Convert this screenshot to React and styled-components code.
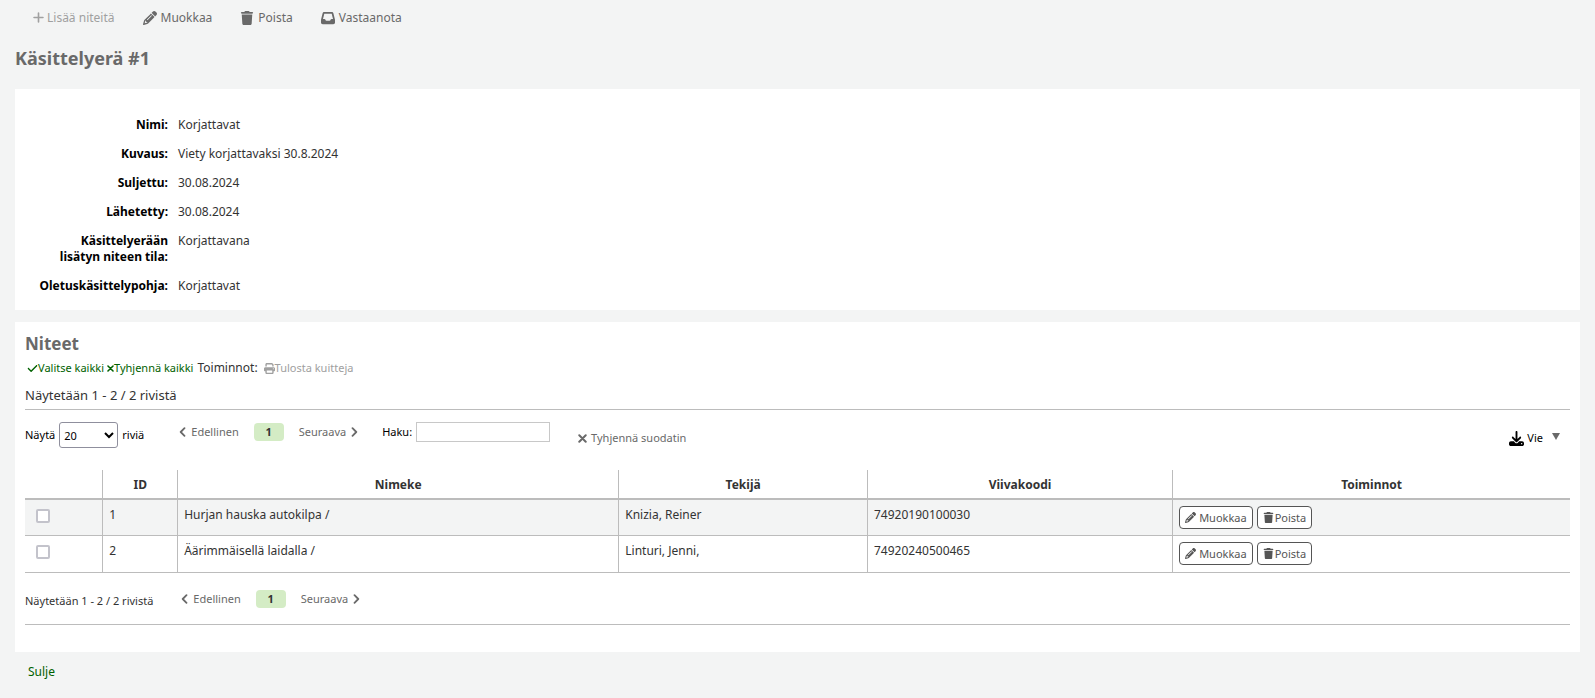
import React, { useState } from 'react';
import styled, { createGlobalStyle } from 'styled-components';
import {
  FaPlus,
  FaPencil,
  FaTrash,
  FaInbox,
  FaCheck,
  FaPrint,
  FaDownload,
} from 'react-icons/fa6';

const details = [
  { label: 'Nimi:', value: 'Korjattavat' },
  { label: 'Kuvaus:', value: 'Viety korjattavaksi 30.8.2024' },
  { label: 'Suljettu:', value: '30.08.2024' },
  { label: 'Lähetetty:', value: '30.08.2024' },
  { label: 'Käsittelyerään lisätyn niteen tila:', value: 'Korjattavana' },
  { label: 'Oletuskäsittelypohja:', value: 'Korjattavat' },
];

const columns = [
  { title: '', width: '5%' },
  { title: 'ID', width: '4.85%' },
  { title: 'Nimeke', width: '28.55%' },
  { title: 'Tekijä', width: '16.1%' },
  { title: 'Viivakoodi', width: '19.75%' },
  { title: 'Toiminnot', width: 'auto' },
];

const items = [
  { id: 1, title: 'Hurjan hauska autokilpa /', author: 'Knizia, Reiner', barcode: '74920190100030' },
  { id: 2, title: 'Äärimmäisellä laidalla /', author: 'Linturi, Jenni,', barcode: '74920240500465' },
];

const GlobalStyle = createGlobalStyle`
  * {
    box-sizing: border-box;
  }

  body {
    margin: 0;
    background: #f3f4f4;
    color: #333;
    font-family: "Noto Sans", "Open Sans", sans-serif;
    font-size: 12px;
    line-height: 16px;
  }

  button,
  input,
  select {
    font: inherit;
  }

  svg {
    flex-shrink: 0;
  }
`;

const Page = styled.main`
  padding: 0 15px;
`;

const Toolbar = styled.div`
  display: flex;
  align-items: center;
  gap: 28px;
  height: 35px;
  padding-left: 17px;
`;

const PlainButton = styled.button`
  display: inline-flex;
  align-items: center;
  gap: ${props => props.$gap ?? 4}px;
  padding: 0;
  border: 0;
  background: none;
  color: ${props => props.$color || '#696969'};
  cursor: pointer;
  white-space: nowrap;

  &:disabled {
    color: #a0a0a0;
    cursor: default;
  }
`;

const SmallButton = styled(PlainButton)`
  font-size: 11px;
`;

const PageTitle = styled.h1`
  margin: 9px 0 17px;
  color: #696969;
  font-size: 18px;
  line-height: 28px;
`;

const Panel = styled.section`
  margin-bottom: 12px;
  padding: ${props => props.$padding};
  background: #fff;
`;

const Details = styled.dl`
  display: grid;
  grid-template-columns: 130px 1fr;
  gap: 13px 10px;
  margin: 0;
`;

const Term = styled.dt`
  color: #000;
  font-weight: 700;
  text-align: right;
`;

const Value = styled.dd`
  margin: 0;
`;

const PanelTitle = styled.h2`
  margin: 0;
  color: #696969;
  font-size: 17px;
  line-height: 24px;
`;

const Actions = styled.div`
  display: flex;
  align-items: center;
  gap: 3px;
  margin-top: 4px;
  padding-left: 2px;
`;

const ActionsLabel = styled.span`
  padding: 0 3px 0 1px;
`;

const Summary = styled.p`
  margin: 0;
  padding: 11px 0 6px;
  border-bottom: 1px solid #bcbcbc;
  font-size: 13px;
`;

const TableTools = styled.div`
  display: flex;
  align-items: flex-start;
  height: 60px;
  padding: 12px 10px 0 0;
  color: #000;
  font-size: 11px;
`;

const LengthLabel = styled.label`
  display: flex;
  align-items: center;
  gap: 4px;
  margin-right: 35px;
`;

const LengthSelect = styled.select`
  width: 59px;
  height: 26px;
  border: 1px solid #8f8f9d;
  border-radius: 3px;
  background: #fff;
  color: #000;
`;

const Pager = styled.nav`
  display: flex;
  align-items: center;
  gap: 15px;
  padding-top: 1px;
  font-size: 11px;
`;

const CurrentPage = styled.button`
  width: 30px;
  height: 18px;
  padding: 0;
  border: 0;
  border-radius: 4px;
  background: #d4ecc5;
  color: #333;
  font-weight: 700;
  line-height: 18px;
`;

const SearchLabel = styled.label`
  display: flex;
  align-items: center;
  gap: 4px;
  margin-left: 24px;
`;

const SearchInput = styled.input`
  width: 134px;
  height: 20px;
  border: 1px solid #c8c8c8;
  background: #fff;
`;

const ClearFilter = styled(SmallButton)`
  margin: 8px 0 0 28px;
`;

const ExportButton = styled(SmallButton)`
  margin: 8px 0 0 auto;
`;

const Caret = styled.span`
  margin: 0 0 4px 6px;
  border: 4px solid transparent;
  border-top: 7px solid #696969;
  border-bottom: 0;
`;

const Table = styled.table`
  width: 100%;
  table-layout: fixed;
  border-collapse: separate;
  border-spacing: 0;
`;

const HeadCell = styled.th`
  width: ${props => props.$width};
  height: 30px;
  padding: 2px 0 0;
  border-bottom: 2px solid #bcbcbc;
  border-left: ${props => (props.$first ? '0' : '1px solid #bcbcbc')};
`;

const Cell = styled.td`
  height: 36px;
  padding: 7px 6px 6px;
  border-bottom: 1px solid #bcbcbc;
  border-left: 1px solid #bcbcbc;
  vertical-align: top;

  &:first-child {
    padding: 9px 11px;
    border-left: 0;
  }

  &:last-child {
    padding: 6px;
  }
`;

const Row = styled.tr`
  &:nth-child(odd) {
    background: #f3f4f4;
  }

  &:last-child td {
    height: 37px;
  }
`;

const Check = styled.input`
  display: block;
  width: 14px;
  height: 14px;
  margin: 0;
  appearance: none;
  border: 2px solid #c3c3cb;
  border-radius: 2px;
  background: #fff;

  &:checked {
    background: #408540;
  }
`;

const RowActions = styled.div`
  display: flex;
  gap: 4px;
`;

const RowButton = styled(SmallButton)`
  height: 23px;
  padding: 0 5px;
  border: 1px solid #555;
  border-radius: 4px;
  background: #fff;
  color: #555;
`;

const TableFooter = styled.div`
  display: flex;
  align-items: center;
  gap: 28px;
  height: 52px;
  border-bottom: 1px solid #bcbcbc;
  font-size: 11px;
`;

const FooterSummary = styled.span`
  padding-top: 4px;
`;

const CloseLink = styled.a`
  display: inline-block;
  margin-left: 13px;
  color: #006100;
  text-decoration: none;
`;

const Chevron = ({ right }) => (
  <svg width="7" height="10" viewBox="0 0 7 10" fill="none" stroke="currentColor" strokeWidth="1.8" strokeLinecap="round" strokeLinejoin="round">
    <path d={right ? 'M1.5 1.2 5.3 5 1.5 8.8' : 'M5.5 1.2 1.7 5 5.5 8.8'} />
  </svg>
);

const Cross = ({ size }) => (
  <svg width={size} height={size} viewBox="0 0 10 10" stroke="currentColor" strokeWidth="2.2" strokeLinecap="round">
    <path d="M1.4 1.4 8.6 8.6M8.6 1.4 1.4 8.6" />
  </svg>
);

const Pagination = () => (
  <Pager aria-label="Sivutus">
    <PlainButton $gap={5}>
      <Chevron /> Edellinen
    </PlainButton>
    <CurrentPage aria-current="page">1</CurrentPage>
    <PlainButton $gap={5}>
      Seuraava <Chevron right />
    </PlainButton>
  </Pager>
);

const App = () => {
  const [selected, setSelected] = useState([]);
  const [search, setSearch] = useState('');

  const toggle = id => {
    setSelected(selected.includes(id) ? selected.filter(s => s !== id) : [...selected, id]);
  };

  return (
    <>
      <GlobalStyle />
      <Page>
        <Toolbar>
          <PlainButton disabled $gap={2}><FaPlus size={13} /> Lisää niteitä</PlainButton>
          <PlainButton><FaPencil size={14} /> Muokkaa</PlainButton>
          <PlainButton><FaTrash size={14} /> Poista</PlainButton>
          <PlainButton><FaInbox size={14} /> Vastaanota</PlainButton>
        </Toolbar>

        <PageTitle>Käsittelyerä #1</PageTitle>

        <Panel $padding="28px 23px 16px">
          <Details>
            {details.map(detail => (
              <React.Fragment key={detail.label}>
                <Term>{detail.label}</Term>
                <Value>{detail.value}</Value>
              </React.Fragment>
            ))}
          </Details>
        </Panel>

        <Panel $padding="10px 10px 27px">
          <PanelTitle>Niteet</PanelTitle>
          <Actions>
            <SmallButton $color="#006100" $gap={0} onClick={() => setSelected(items.map(i => i.id))}>
              <FaCheck size={11} />Valitse kaikki
            </SmallButton>
            <SmallButton $color="#006100" $gap={0} onClick={() => setSelected([])}>
              <Cross size={7} />Tyhjennä kaikki
            </SmallButton>
            <ActionsLabel>Toiminnot:</ActionsLabel>
            <SmallButton $gap={0} disabled={selected.length === 0}>
              <FaPrint size={11} />Tulosta kuitteja
            </SmallButton>
          </Actions>
          <Summary>Näytetään 1 - 2 / 2 rivistä</Summary>

          <TableTools>
            <LengthLabel>
              Näytä
              <LengthSelect defaultValue="20">
                <option>10</option>
                <option>20</option>
                <option>50</option>
                <option>100</option>
              </LengthSelect>
              riviä
            </LengthLabel>
            <Pagination />
            <SearchLabel>
              Haku:
              <SearchInput type="search" value={search} onChange={e => setSearch(e.target.value)} />
            </SearchLabel>
            <ClearFilter onClick={() => setSearch('')}><Cross size={9} /> Tyhjennä suodatin</ClearFilter>
            <ExportButton $color="#000" $gap={3}><FaDownload size={15} /> Vie <Caret /></ExportButton>
          </TableTools>

          <Table>
            <thead>
              <tr>
                {columns.map((column, index) => (
                  <HeadCell key={index} $width={column.width} $first={index === 0}>{column.title}</HeadCell>
                ))}
              </tr>
            </thead>
            <tbody>
              {items.map(item => (
                <Row key={item.id}>
                  <Cell>
                    <Check
                      type="checkbox"
                      aria-label={item.title}
                      checked={selected.includes(item.id)}
                      onChange={() => toggle(item.id)}
                    />
                  </Cell>
                  <Cell>{item.id}</Cell>
                  <Cell>{item.title}</Cell>
                  <Cell>{item.author}</Cell>
                  <Cell>{item.barcode}</Cell>
                  <Cell>
                    <RowActions>
                      <RowButton $gap={3}><FaPencil size={11} /> Muokkaa</RowButton>
                      <RowButton $gap={1}><FaTrash size={11} /> Poista</RowButton>
                    </RowActions>
                  </Cell>
                </Row>
              ))}
            </tbody>
          </Table>

          <TableFooter>
            <FooterSummary>Näytetään 1 - 2 / 2 rivistä</FooterSummary>
            <Pagination />
          </TableFooter>
        </Panel>

        <CloseLink href="#sulje">Sulje</CloseLink>
      </Page>
    </>
  );
};

export default App;
